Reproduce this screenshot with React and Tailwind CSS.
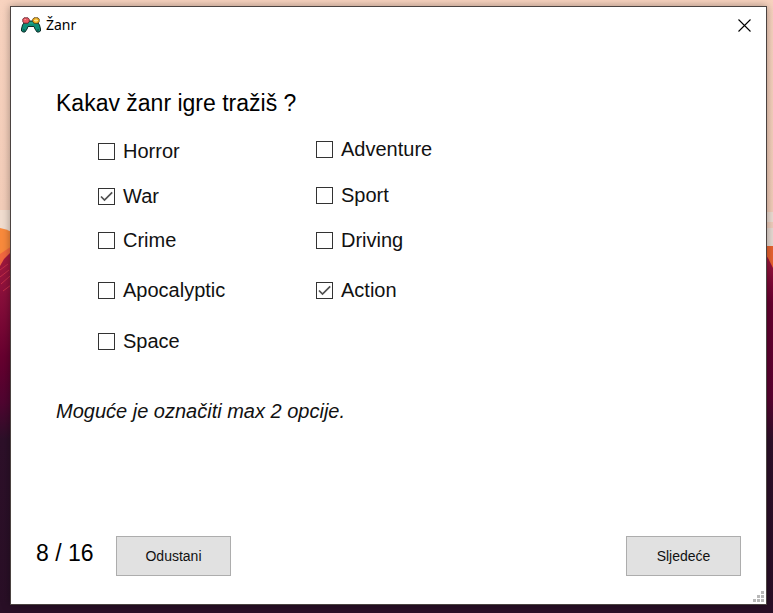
import React, { useState } from "react";

const leftGenres = ["Horror", "War", "Crime", "Apocalyptic", "Space"];
const rightGenres = ["Adventure", "Sport", "Driving", "Action"];

function Wallpaper() {
  return (
    <svg className="absolute inset-0 h-full w-full" viewBox="0 0 773 613" preserveAspectRatio="none" aria-hidden="true">
      <defs>
        <linearGradient id="sky" x1="0" y1="0" x2="0" y2="1">
          <stop offset="0" stopColor="#f8d3bf" />
          <stop offset="0.8" stopColor="#f3cdb9" />
          <stop offset="1" stopColor="#e6cfc2" />
        </linearGradient>
        <linearGradient id="ground" x1="0" y1="0" x2="0" y2="1">
          <stop offset="0" stopColor="#a51a3e" />
          <stop offset="0.12" stopColor="#8a0f3b" />
          <stop offset="0.3" stopColor="#66002f" />
          <stop offset="0.42" stopColor="#4f0530" />
          <stop offset="0.52" stopColor="#2d1029" />
          <stop offset="1" stopColor="#290f26" />
        </linearGradient>
        <linearGradient id="groundRight" x1="0" y1="0" x2="0" y2="1">
          <stop offset="0" stopColor="#a51a3e" />
          <stop offset="0.08" stopColor="#7d0836" />
          <stop offset="0.14" stopColor="#66002f" />
          <stop offset="0.4" stopColor="#5a0230" />
          <stop offset="0.52" stopColor="#2d1029" />
          <stop offset="1" stopColor="#290f26" />
        </linearGradient>
      </defs>
      <rect width="773" height="260" fill="url(#sky)" />
      <rect y="210" width="12" height="22" fill="#f1ddcf" />
      <rect x="765" y="212" width="8" height="10" fill="#ecdcd2" />
      <rect x="765" y="228" width="8" height="18" fill="#e6dad2" />
      <path d="M0 228 Q6 229 12 232 V270 H0Z" fill="#f98a3c" />
      <path d="M0 254 L12 246 V280 H0Z" fill="#f2683f" />
      <rect x="765" y="246" width="8" height="30" fill="#e8622f" />
      <path d="M0 266 L4 259 L12 251 V613 H0Z" fill="url(#ground)" />
      <path d="M765 254 L768 258 L773 268 V613 H765Z" fill="url(#groundRight)" />
      <path d="M0 270 L8 264 M0 277 L9 270 M1 284 L10 276 M3 291 L11 285" stroke="#c22f48" strokeWidth="1" />
      <rect y="603" width="773" height="10" fill="#290f26" />
    </svg>
  );
}

function GamepadIcon() {
  return (
    <svg width="20" height="16" viewBox="0 0 20 16" aria-hidden="true">
      <path
        d="M3 6 L7 5.5 L8 4 H12 L13 5.5 L17 6 L18.5 8 L19.5 12 V14 L18 15 H16 L14 12 L13 9.5 H7 L6 12 L4 15 H2 L0.5 14 V12 L1.5 8Z"
        fill="#0f8f78"
        stroke="#0c2a26"
        strokeWidth="1"
      />
      <path d="M2 12.5 L4 13.5 M18 12.5 L16 13.5" stroke="#0a6457" strokeWidth="1.5" />
      <path d="M8 6 H12" stroke="#2fb598" strokeWidth="1" />
      <path d="M3 0.8 H7 L8.2 2.2 V4.8 L7 6.2 H3 L1.8 4.8 V2.2Z" fill="#ee5c63" stroke="#5a1f2b" strokeWidth="0.8" />
      <path d="M13 0.8 H17 L18.2 2.2 V4.8 L17 6.2 H13 L11.8 4.8 V2.2Z" fill="#f6b51e" stroke="#503a10" strokeWidth="0.8" />
      <path d="M3.5 2.5 H5" stroke="#ff9a9a" strokeWidth="1" />
      <path d="M15 1.5 V5.5 M13 3.5 H17" stroke="#ffe38c" strokeWidth="1" />
    </svg>
  );
}

function GenreOption({ name, checked, onToggle }) {
  return (
    <label className="flex h-6 items-center gap-2 text-xl leading-6">
      <span className="grid h-[17px] w-[17px] shrink-0">
        <input
          type="checkbox"
          checked={checked}
          onChange={onToggle}
          className="col-start-1 row-start-1 h-[17px] w-[17px] appearance-none border border-[#333333] bg-white"
        />
        {checked && (
          <svg className="pointer-events-none col-start-1 row-start-1" width="17" height="17" viewBox="0 0 17 17" aria-hidden="true">
            <path d="M3 8.5 L6.5 12 L14.2 4.3" fill="none" stroke="#505050" strokeWidth="1.7" />
          </svg>
        )}
      </span>
      <span>{name}</span>
    </label>
  );
}

export default function App() {
  const [selected, setSelected] = useState(["War", "Action"]);

  const toggle = (name) =>
    setSelected((current) => {
      if (current.includes(name)) return current.filter((item) => item !== name);
      return current.length < 2 ? [...current, name] : current;
    });

  const option = (name) => (
    <GenreOption key={name} name={name} checked={selected.includes(name)} onToggle={() => toggle(name)} />
  );

  return (
    <div className="relative isolate flex min-h-screen flex-col pt-1.5 pr-1.5 pb-2 pl-2.5 font-['Liberation_Sans',Arial,sans-serif] text-[#111111]">
      <Wallpaper />
      <main className="relative flex flex-1 flex-col border border-[#4b4341] bg-white shadow-[0_0_8px_rgba(0,0,0,0.35)]">
        <header className="flex h-9 items-center gap-[5px] pl-2.5 font-['Noto_Sans',sans-serif]">
          <GamepadIcon />
          <h1 className="flex-1 text-sm leading-5 text-black">Žanr</h1>
          <button type="button" aria-label="Zatvori" className="grid h-9 w-11 place-items-center">
            <svg width="13" height="13" viewBox="0 0 13 13" aria-hidden="true">
              <path d="M0.5 0.5 L12.5 12.5 M12.5 0.5 L0.5 12.5" stroke="#000000" strokeWidth="1.1" />
            </svg>
          </button>
        </header>

        <section className="flex-1 px-[45px] pt-[46px]">
          <h2 className="text-[23px] leading-7 text-black">Kakav žanr igre tražiš ?</h2>
          <div className="flex pt-5 pl-[42px]">
            <div className="grid w-[218px] grid-rows-[45px_44px_50px_51px_24px] pt-0.5">{leftGenres.map(option)}</div>
            <div className="grid grid-rows-[46px_45px_50px_24px] content-start">{rightGenres.map(option)}</div>
          </div>
          <p className="pt-[46px] text-xl leading-6 italic">Moguće je označiti max 2 opcije.</p>
        </section>

        <footer className="flex items-start px-[25px] pb-7">
          <span className="w-20 pt-[3px] text-[23px] leading-7 text-black">8 / 16</span>
          <button type="button" className="h-10 w-[115px] border border-[#adadad] bg-[#e1e1e1] text-sm">
            Odustani
          </button>
          <button type="button" className="ml-auto h-10 w-[115px] border border-[#adadad] bg-[#e1e1e1] text-sm">
            Sljedeće
          </button>
        </footer>

        <svg className="absolute right-0.5 bottom-0.5" width="11" height="11" viewBox="0 0 11 11" fill="#b8b8b8" aria-hidden="true">
          <path d="M8 0h3v3h-3z M4 4h3v3h-3z M8 4h3v3h-3z M0 8h3v3h-3z M4 8h3v3h-3z M8 8h3v3h-3z" />
        </svg>
      </main>
    </div>
  );
}
